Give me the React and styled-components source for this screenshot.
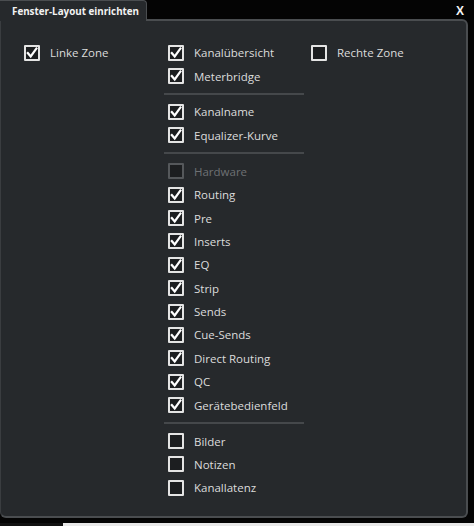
import React from "react";
import styled, { createGlobalStyle } from "styled-components";

const Global = createGlobalStyle`
  html, body { margin: 0; padding: 0; background: #040404; }
  body { width: 474px; height: 526px; overflow: hidden; font-family: "Open Sans", "Noto Sans", sans-serif; }
`;

const Window = styled.div`
  width: 474px;
  height: 526px;
  display: flex;
  flex-direction: column;
  background: #040404;
`;

const TitleBar = styled.div`
  height: 19px;
  display: flex;
  align-items: stretch;
  justify-content: space-between;
`;

const Tab = styled.div`
  width: 147px;
  box-sizing: border-box;
  background: #26292c;
  border-top: 1px solid #4a4d50;
  border-right: 1px solid #4a4d50;
  border-top-right-radius: 4px;
  color: #f2f2f2;
  font-weight: 700;
  font-size: 9.8px;
  display: flex;
  align-items: center;
  padding-left: 12px;
  padding-top: 1px;
  position: relative;
  z-index: 1;
  margin-bottom: -2px;
`;

const Close = styled.div`
  color: #f4f4f4;
  font-weight: 700;
  font-size: 12px;
  font-family: "Liberation Sans", sans-serif;
  padding: 4px 10px 0 0;
`;

const Panel = styled.div`
  width: 468px;
  height: 499px;
  box-sizing: border-box;
  background: #26292c;
  border: 2px solid #4a4d50;
  border-left: 1px solid #3a3d40;
  border-radius: 0 6px 6px 6px;
  display: grid;
  grid-template-columns: 133px 140px 150px;
  column-gap: 7px;
  align-items: start;
  padding: 20px 0 0 23px;
`;

const Column = styled.div`
  display: flex;
  flex-direction: column;
`;

const Row = styled.label`
  height: 23.4px;
  display: flex;
  align-items: center;
  gap: 10px;
  padding-left: ${(p) => p.$indent || 0}px;
  color: ${(p) => (p.$disabled ? "#6e7174" : "#dcdcdc")};
  font-size: 11.5px;
`;

const Box = styled.span`
  width: 16px;
  height: 16px;
  box-sizing: border-box;
  border: 2px solid ${(p) => (p.$disabled ? "#55585b" : "#e4e4e4")};
  background: #1c1e20;
  border-radius: 1px;
  display: flex;
  align-items: center;
  justify-content: center;
  flex: none;
`;

const Separator = styled.div`
  height: 2px;
  background: #45484b;
  margin: 5px 0 5.5px;
`;

const BottomStrip = styled.div`
  display: flex;
  margin-top: 5px;
  height: 3px;
`;

const StripDark = styled.div`
  width: 63px;
  background: #111;
`;

const StripLight = styled.div`
  flex: 1;
  background: #e8e8e8;
`;

function Check({ label, checked, disabled, indent }) {
  return (
    <Row $disabled={disabled} $indent={indent}>
      <Box $disabled={disabled}>
        {checked && (
          <svg width="12" height="12" viewBox="0 0 12 12">
            <path d="M1.8 6 L4.7 9.4 L10.4 1.6" fill="none" stroke="#ffffff" strokeWidth="2.2" strokeLinecap="square" />
          </svg>
        )}
      </Box>
      <span>{label}</span>
    </Row>
  );
}

const groups = [
  [["Kanalübersicht", true], ["Meterbridge", true]],
  [["Kanalname", true], ["Equalizer-Kurve", true]],
  [
    ["Hardware", false, true],
    ["Routing", true],
    ["Pre", true],
    ["Inserts", true],
    ["EQ", true],
    ["Strip", true],
    ["Sends", true],
    ["Cue-Sends", true],
    ["Direct Routing", true],
    ["QC", true],
    ["Gerätebedienfeld", true],
  ],
  [["Bilder", false], ["Notizen", false], ["Kanallatenz", false]],
];

export default function App() {
  return (
    <Window>
      <Global />
      <TitleBar>
        <Tab>Fenster-Layout einrichten</Tab>
        <Close>X</Close>
      </TitleBar>
      <Panel>
        <Column>
          <Check label="Linke Zone" checked />
        </Column>
        <Column>
          {groups.map((g, gi) => (
            <React.Fragment key={gi}>
              {gi > 0 && <Separator />}
              {g.map(([l, c, d]) => (
                <Check key={l} label={l} checked={c} disabled={d} indent={4} />
              ))}
            </React.Fragment>
          ))}
        </Column>
        <Column>
          <Check label="Rechte Zone" />
        </Column>
      </Panel>
      <BottomStrip>
        <StripDark />
        <StripLight />
      </BottomStrip>
    </Window>
  );
}
